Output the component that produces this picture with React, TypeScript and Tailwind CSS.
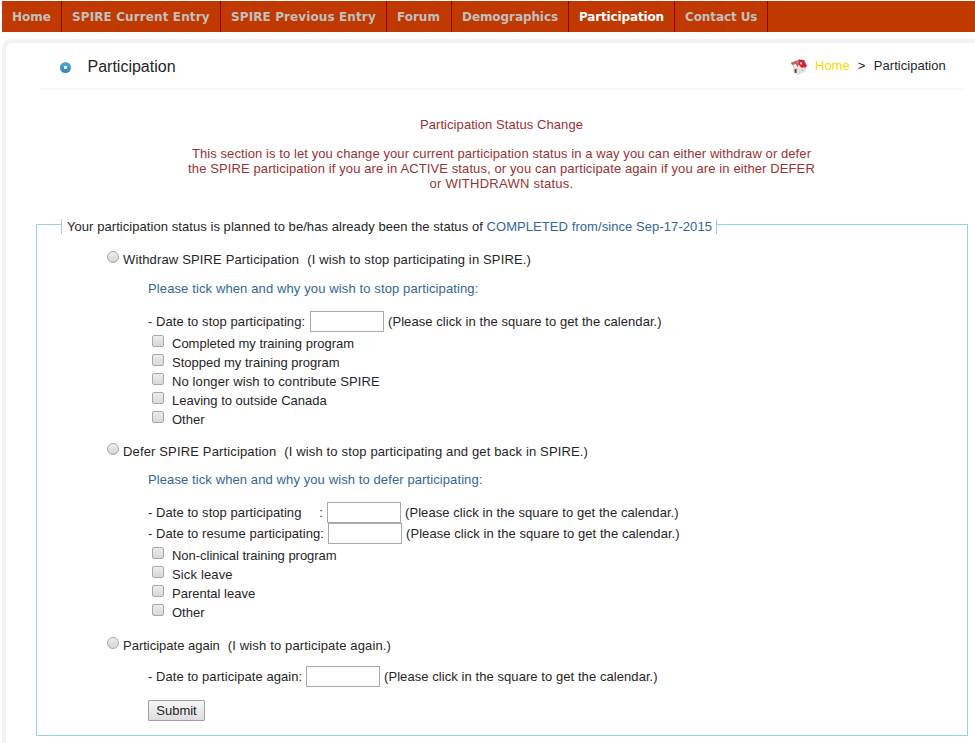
import React from "react";

const navItems = [
  { label: "Home", width: "w-[60px]" },
  { label: "SPIRE Current Entry", width: "w-[159px]", tracking: "tracking-[0.11px]" },
  { label: "SPIRE Previous Entry", width: "w-[166px]", tracking: "tracking-[0.11px]" },
  { label: "Forum", width: "w-[65px]" },
  { label: "Demographics", width: "w-[117px]", tracking: "tracking-[-0.08px]" },
  { label: "Participation", width: "w-[106px]", tracking: "tracking-[-0.15px]", active: true },
  { label: "Contact Us", width: "w-[93px]", tracking: "tracking-[-0.1px]" },
];

function HouseIcon() {
  return (
    <svg width="16" height="16" viewBox="0 0 16 16" className="relative top-[1px] shrink-0">
      <path d="M2 6 L7 9 L7 15.5 L2 12.5 Z" fill="#e6dfd8" />
      <path d="M6.5 8.5 L10 5 L15 8 L15 12 L8 16 L6.5 15 Z" fill="#e4e4e6" />
      <path d="M0 3.5 L8 0.5 L10 3 L6.5 8 L4.5 5 L1 6.5 Z" fill="#c27a76" />
      <path d="M8 0.5 L13 1 L16 7 L14.5 8.5 L10 8.5 L7.5 5 Z" fill="#e01c34" />
      <path d="M0.5 4.5 L5 3.5 L7 7.5" fill="none" stroke="#a05854" strokeWidth="0.9" />
      <rect x="9" y="3" width="2.2" height="2.8" fill="#f4dede" stroke="#97323c" strokeWidth="0.5" />
      <rect x="3.6" y="10" width="2" height="4" fill="#6e4a1c" />
      <rect x="10" y="10.5" width="2.5" height="1.6" fill="#c3c8d0" />
    </svg>
  );
}

function Radio() {
  return (
    <input
      type="radio"
      className="mt-[1px] mr-[4px] size-[12px] shrink-0 appearance-none rounded-full border border-[#a9a9a9] bg-linear-to-b from-[#ededed] to-[#d6d6d6]"
    />
  );
}

function Check({ label, tracking = "" }: { label: string; tracking?: string }) {
  return (
    <label className="flex h-[19px] pl-[4px]">
      <input
        type="checkbox"
        className="mt-[1px] mr-[8px] size-[12px] shrink-0 appearance-none rounded-[2px] border border-[#a9a9a9] bg-linear-to-b from-[#ededed] to-[#d8d8d8]"
      />
      <span className={`leading-[19px] ${tracking}`}>{label}</span>
    </label>
  );
}

function Option({ title, note, tracking }: { title: string; note: string; tracking: string }) {
  return (
    <label className="ml-[70px] flex h-[19px]">
      <Radio />
      <span className={`leading-[19px] ${tracking}`}>{title}</span>
      <span className="ml-[8px] leading-[19px] tracking-[0.14px]">{note}</span>
    </label>
  );
}

function DateRow({ label, width, colon }: { label: string; width: string; colon?: boolean }) {
  return (
    <div className="flex h-[21px] leading-[21px]">
      <span className={`flex shrink-0 justify-between tracking-[0.06px] ${width}`}>
        <span>{label}</span>
        {colon && <span className="mr-[4px]">:</span>}
      </span>
      <input type="text" className="h-[21px] w-[74px] shrink-0 border border-[#a9a9a9] bg-white" />
      <span className="ml-[4px] tracking-[0.07px]">(Please click in the square to get the calendar.)</span>
    </div>
  );
}

export default function App() {
  return (
    <div className="h-[743px] w-[975px] overflow-hidden bg-white pt-px pl-[2px] font-['Liberation_Sans',Arial,sans-serif] text-[13px] whitespace-nowrap text-[#262626]">
      <nav className="flex h-[31px] bg-[#bf3900] font-['DejaVu_Sans',Verdana,sans-serif] text-[12px] font-bold">
        {navItems.map((item) => (
          <a
            key={item.label}
            className={`h-[31px] shrink-0 border-r border-[#980000] pt-px pl-[10px] leading-[30px] ${item.width} ${item.tracking ?? ""} ${item.active ? "text-white" : "text-[#c0c0c0]"}`}
          >
            {item.label}
          </a>
        ))}
      </nav>

      <main className="mt-[7px] h-[720px] w-[1000px] rounded-tl-[10px] border-4 border-[#f3f3f3]">
        <header className="ml-[33px] flex h-[47px] w-[926px] items-center border-b-2 border-[#f9f9f9]">
          <span className="mt-[4px] ml-[21px] flex size-[11px] items-center justify-center rounded-full bg-linear-to-b from-[#55aed2] to-[#2f83b8]">
            <span className="size-[3px] rounded-[1px] bg-white" />
          </span>
          <h1 className="mt-[2px] ml-[16.5px] text-[16px] leading-[19px]">Participation</h1>
          <div className="ml-auto flex w-[174px] items-center">
            <HouseIcon />
            <a className="ml-[8px] text-[#ffd700]">Home</a>
            <span className="ml-[8px]">&gt;</span>
            <span className="ml-[8.5px] tracking-[0.04px]">Participation</span>
          </div>
        </header>

        <div className="mt-[27px] w-[991px] text-center leading-[15px] text-[#993333]">
          <p className="tracking-[0.07px]">Participation Status Change</p>
          <p className="mt-[14px]">
            <span className="tracking-[0.085px]">
              This section is to let you change your current participation status in a way you can either withdraw or defer
            </span>
            <br />
            <span className="tracking-[0.11px]">
              the SPIRE participation if you are in ACTIVE status, or you can participate again if you are in either DEFER
            </span>
            <br />
            <span className="tracking-[0.25px]">or WITHDRAWN status.</span>
          </p>
        </div>

        <section className="mt-[33px] ml-[30px] h-[512px] w-[932px] border border-[#9ccfe5]">
          <div className="-mt-[6px] ml-[24px] h-[15px] w-[656px] border-x border-[#9ccfe5] bg-white pl-[5px] leading-[15px] tracking-[0.06px]">
            Your participation status is planned to be/has already been the status of{" "}
            <span className="tracking-[0.07px] text-[#336699]">COMPLETED from/since Sep-17-2015</span>
          </div>

          <div className="mt-[16px]">
            <Option
              title="Withdraw SPIRE Participation"
              note="(I wish to stop participating in SPIRE.)"
              tracking="tracking-[0.15px]"
            />
            <div className="ml-[111px]">
              <p className="mt-[10px] h-[19px] leading-[19px] tracking-[0.12px] text-[#336699]">
                Please tick when and why you wish to stop participating:
              </p>
              <div className="mt-[13px] mb-[2px]">
                <DateRow label="- Date to stop participating:" width="w-[162px]" />
              </div>
              <Check label="Completed my training program" />
              <Check label="Stopped my training program" />
              <Check label="No longer wish to contribute SPIRE" tracking="tracking-[0.12px]" />
              <Check label="Leaving to outside Canada" />
              <Check label="Other" />
            </div>
          </div>

          <div className="mt-[13px]">
            <Option
              title="Defer SPIRE Participation"
              note="(I wish to stop participating and get back in SPIRE.)"
              tracking="tracking-[0.15px]"
            />
            <div className="ml-[111px]">
              <p className="mt-[9px] h-[19px] leading-[19px] tracking-[0.1px] text-[#336699]">
                Please tick when and why you wish to defer participating:
              </p>
              <div className="mt-[13px] mb-[2px]">
                <DateRow label="- Date to stop participating" width="w-[179px]" colon />
                <DateRow label="- Date to resume participating:" width="w-[180px]" />
              </div>
              <Check label="Non-clinical training program" tracking="tracking-[-0.03px]" />
              <Check label="Sick leave" tracking="tracking-[0.15px]" />
              <Check label="Parental leave" />
              <Check label="Other" />
            </div>
          </div>

          <div className="mt-[14px]">
            <Option title="Participate again" note="(I wish to participate again.)" tracking="tracking-[0px]" />
            <div className="mt-[11px] ml-[111px]">
              <DateRow label="- Date to participate again:" width="w-[158px]" />
              <button className="mt-[13px] block h-[21px] w-[57px] rounded-[1px] border border-[#a0a0a0] bg-linear-to-b from-[#f6f6f6] to-[#dddddd] text-center leading-[19px]">
                Submit
              </button>
            </div>
          </div>
        </section>
      </main>
    </div>
  );
}
